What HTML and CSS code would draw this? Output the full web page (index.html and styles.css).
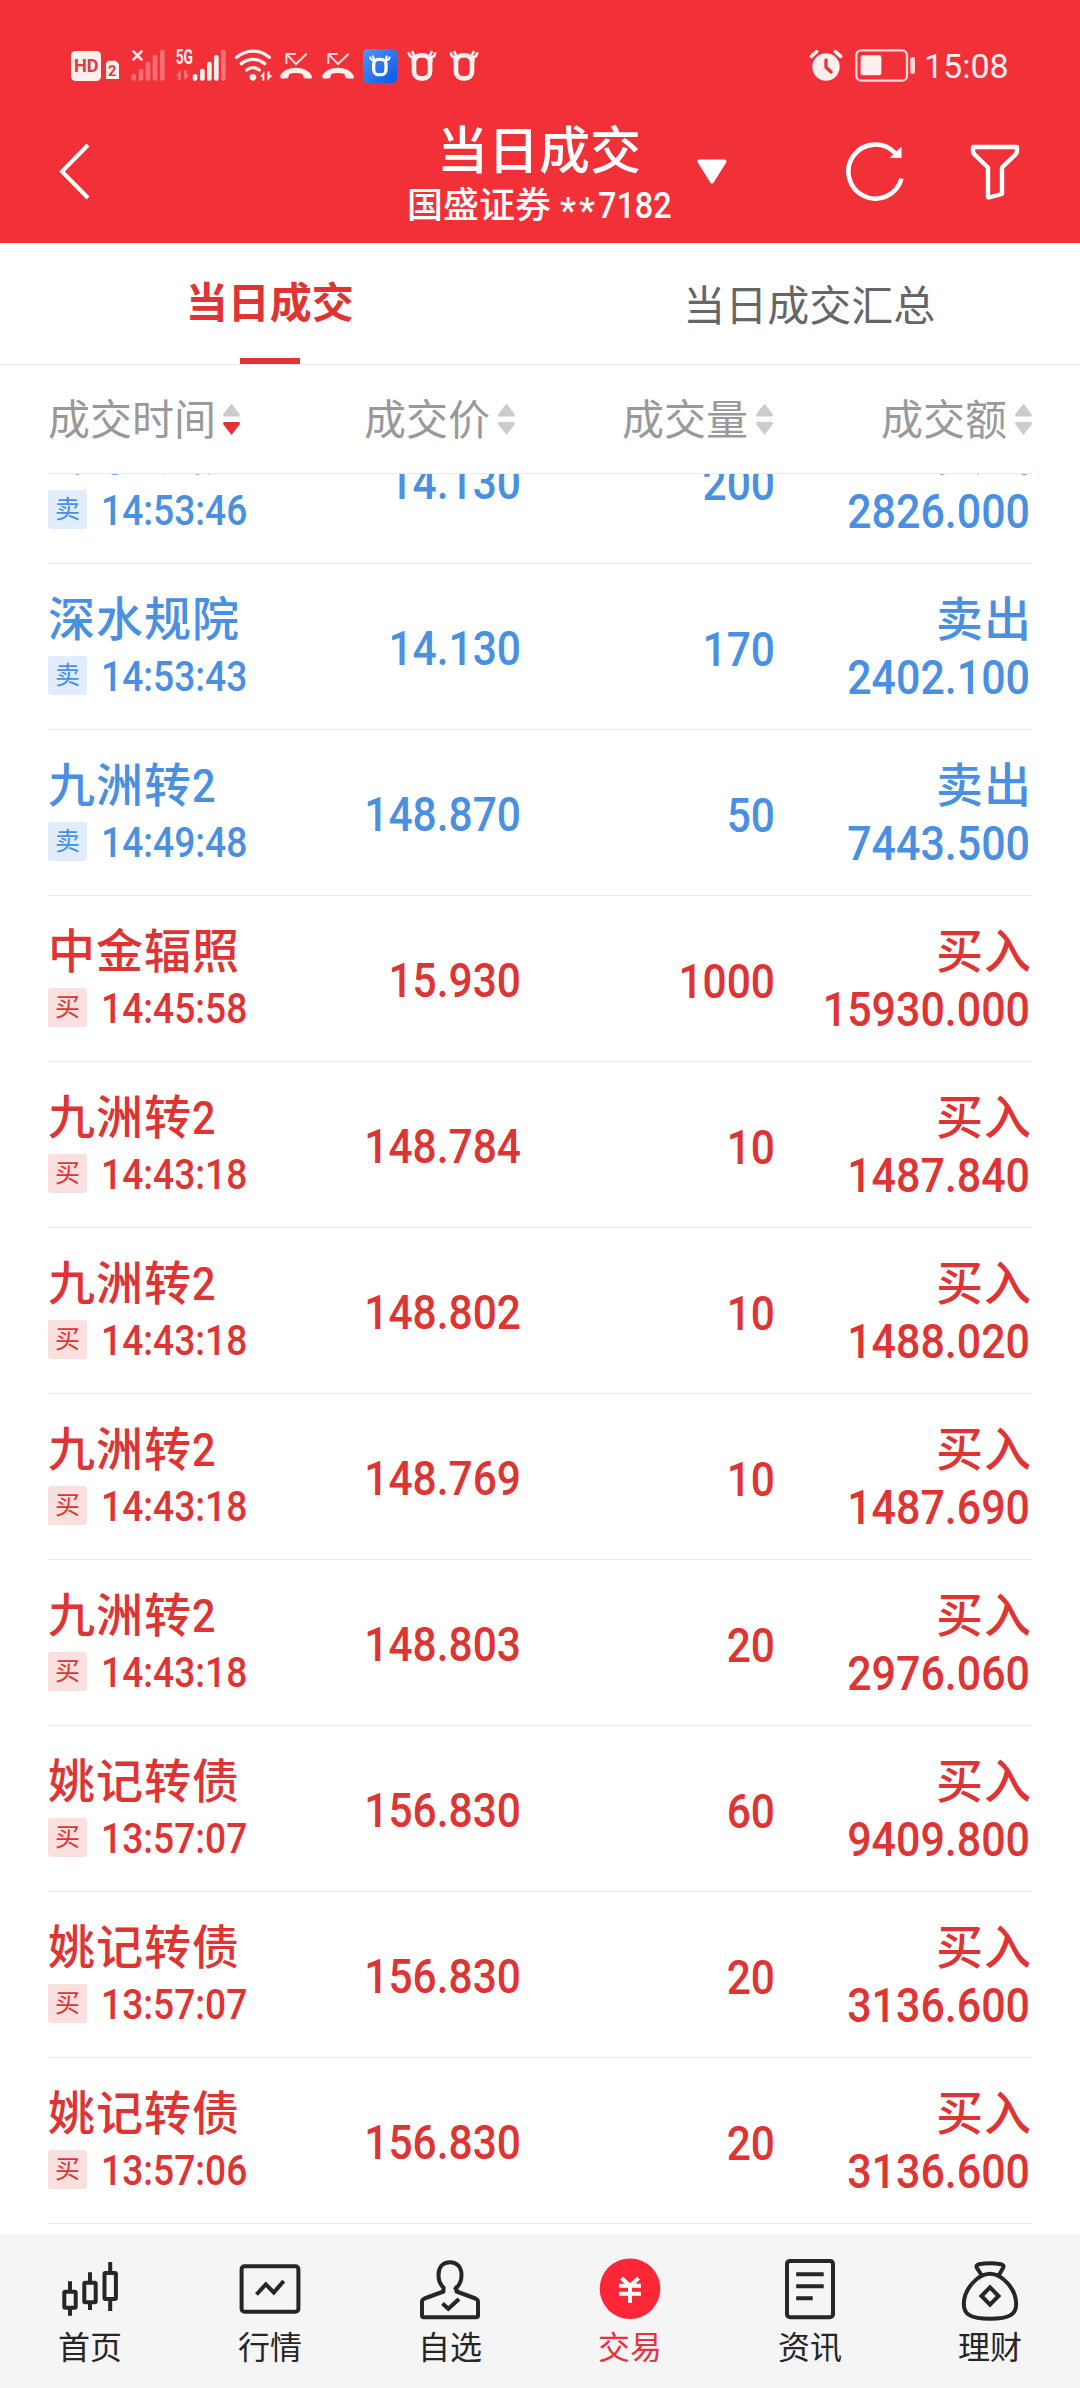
FILE: index.html
```html
<!DOCTYPE html>
<html lang="zh-CN">
<head>
<meta charset="utf-8">
<title>当日成交</title>
<link rel="stylesheet" href="styles.css">
</head>
<body>
<header class="header">
  <div class="status">
    <div class="status-left">
      <svg width="52" height="40" viewBox="90 45 156 120">
        <rect x="93" y="63" width="90" height="90" rx="14" fill="#fff0f0"/>
        <text x="102" y="127" class="hd" textLength="74" lengthAdjust="spacingAndGlyphs">HD</text>
        <path d="M204 92H227L237 102V147H198V98Z" fill="#fff0f0"/>
        <text x="217" y="138" class="sim" text-anchor="middle">2</text>
      </svg>
      <svg width="50" height="40" viewBox="246 45 150 120">
        <path d="M278 62L307 91M307 62L278 91" stroke="#fff0f0" stroke-width="8"/>
        <g fill="#fff" opacity=".3"><rect x="274" y="132" width="14" height="20" rx="6"/><rect x="296" y="116" width="14" height="36" rx="6"/><rect x="317" y="95" width="14" height="57" rx="6"/><rect x="338" y="75" width="14" height="77" rx="6"/><rect x="360" y="59" width="14" height="93" rx="6"/></g>
      </svg>
      <svg width="60" height="40" viewBox="396 45 180 120">
        <text x="407" y="101" class="net" textLength="52" lengthAdjust="spacingAndGlyphs">5G</text>
        <path d="M408 138L422 120V150H415V136ZM433 120V150L449 134H440V120Z" fill="#ff7c80"/>
        <g fill="#fff0f0"><rect x="458" y="132" width="14" height="20" rx="6"/><rect x="480" y="116" width="14" height="36" rx="6"/><rect x="501" y="95" width="14" height="57" rx="6"/><rect x="522" y="75" width="14" height="77" rx="6"/><rect x="543" y="59" width="14" height="93" rx="6" opacity=".35"/></g>
      </svg>
      <svg width="44" height="40" viewBox="576 45 132 120">
        <g fill="none" stroke="#fff0f0" stroke-width="10" stroke-linecap="round"><path d="M590 82C619 57 659 57 688 82M604 101C625 84 653 84 674 101M620 120C632 111 646 111 658 120"/></g>
        <circle cx="639" cy="142" r="10" fill="#fff0f0"/>
        <path d="M660 140L673 124V152H667V140ZM682 124V152L698 136H689V124Z" fill="#fff0f0"/>
      </svg>
      <svg width="42" height="40" viewBox="708 45 126 120">
        <path d="M739 102V72H768M740 73L768 102L800 71" fill="none" stroke="#ffd9da" stroke-width="6"/>
        <path d="M720 139C735 105 800 105 816 139L814 146L792 145L787 132Q768 126 748 132L744 145L724 146Z" fill="#fff0f0"/>
      </svg>
      <svg width="42" height="40" viewBox="708 45 126 120">
        <path d="M739 102V72H768M740 73L768 102L800 71" fill="none" stroke="#ffd9da" stroke-width="6"/>
        <path d="M720 139C735 105 800 105 816 139L814 146L792 145L787 132Q768 126 748 132L744 145L724 146Z" fill="#fff0f0"/>
      </svg>
      <svg width="42" height="40" viewBox="960 45 126 120">
        <defs><linearGradient id="blue" x1="0" y1="0" x2="1" y2="1"><stop offset="0" stop-color="#5296f4"/><stop offset="1" stop-color="#0858ec"/></linearGradient></defs>
        <rect x="969" y="57" width="102" height="102" rx="14" fill="url(#blue)"/>
        <rect x="1001" y="88" width="37" height="46" rx="15" fill="none" stroke="#fff" stroke-width="10"/>
        <path d="M1006 92Q991 92 990 80M1033 92Q1048 92 1049 80M1003 91L998 77M1036 91L1041 77" fill="none" stroke="#fff" stroke-width="6"/>
      </svg>
      <svg width="42" height="40" viewBox="1086 45 126 120">
        <rect x="1122" y="76" width="48" height="69" rx="20" fill="none" stroke="#fff0f0" stroke-width="14"/>
        <path d="M1127 82Q1108 85 1106 67M1165 82Q1184 85 1186 67M1124 80L1116 63M1168 80L1176 63M1118 82V96M1174 82V96" fill="none" stroke="#fff0f0" stroke-width="8"/>
      </svg>
      <svg width="42" height="40" viewBox="1086 45 126 120">
        <rect x="1122" y="76" width="48" height="69" rx="20" fill="none" stroke="#fff0f0" stroke-width="14"/>
        <path d="M1127 82Q1108 85 1106 67M1165 82Q1184 85 1186 67M1124 80L1116 63M1168 80L1176 63M1118 82V96M1174 82V96" fill="none" stroke="#fff0f0" stroke-width="8"/>
      </svg>
    </div>
    <div class="status-right">
      <svg width="36" height="40" viewBox="84 45 108 120">
        <circle cx="138" cy="111" r="41" fill="#fff0f0"/>
        <path d="M94 79L110 65M182 79L166 65" stroke="#fff0f0" stroke-width="11" stroke-linecap="round"/>
        <path d="M138 90V112L153 126" fill="none" stroke="#f23038" stroke-width="10" stroke-linecap="round" stroke-linejoin="round"/>
      </svg>
      <svg class="battery" width="66" height="40" viewBox="216 45 198 120">
        <rect x="229" y="61" width="152" height="91" rx="15" fill="none" stroke="#ffd9da" stroke-width="7"/>
        <rect x="242" y="76" width="62" height="60" rx="6" fill="#fff0f0"/>
        <rect x="391" y="81" width="14" height="51" rx="6" fill="#ffd9da"/>
      </svg>
      <span class="clock">15:08</span>
    </div>
  </div>
  <div class="titlebar">
    <svg class="back" width="40" height="64" viewBox="0 0 40 64"><path d="M34 6L8 32.500L34 59" fill="none" stroke="#fff" stroke-width="4"/></svg>
    <div class="titles">
      <div class="title">当日成交</div>
      <div class="account"><span>国盛证券</span><span class="stars">**</span><span class="tail">7182</span></div>
    </div>
    <svg class="caret" width="30" height="25" viewBox="0 0 30 25"><path d="M2.500 2.500H27.500L15 22.500Z" fill="#fff" stroke="#fff" stroke-width="4" stroke-linejoin="round"/></svg>
    <svg class="refresh" width="60" height="60" viewBox="0 0 60 60">
      <path d="M55.500 37.500A27 27 0 1 1 49 12" fill="none" stroke="#fff" stroke-width="4.600"/>
      <path d="M55.500 5.500V17H43.500Z" fill="#fff"/>
    </svg>
    <svg class="filter" width="52" height="60" viewBox="0 0 52 60"><path d="M4.500 5H47.500Q48 5 48 5.500V9Q48 11 46.500 12.500L33 25.500V52L20 55.500Q19 55.500 19 54.500V25.500L5.500 12.500Q4 11 4 9V5.500Q4 5 4.500 5Z" fill="none" stroke="#fff" stroke-width="4.400" stroke-linejoin="round"/></svg>
  </div>
</header>

<nav class="tabs">
  <div class="tab active">当日成交</div>
  <div class="tab">当日成交汇总</div>
</nav>

<div class="columns">
  <div class="col"><span>成交时间</span><i class="sort desc"></i></div>
  <div class="col"><span>成交价</span><i class="sort"></i></div>
  <div class="col"><span>成交量</span><i class="sort"></i></div>
  <div class="col"><span>成交额</span><i class="sort"></i></div>
</div>

<main class="list">
  <div class="row sell"><div><div class="name">深水规院</div><div class="when"><span class="tag">卖</span><span class="time">14:53:46</span></div></div><div class="num">14.130</div><div class="num qty">200</div><div class="sum"><div class="side">卖出</div><div class="num amount">2826.000</div></div></div>
  <div class="row sell"><div><div class="name">深水规院</div><div class="when"><span class="tag">卖</span><span class="time">14:53:43</span></div></div><div class="num">14.130</div><div class="num qty">170</div><div class="sum"><div class="side">卖出</div><div class="num amount">2402.100</div></div></div>
  <div class="row sell"><div><div class="name">九洲转<span class="digit">2</span></div><div class="when"><span class="tag">卖</span><span class="time">14:49:48</span></div></div><div class="num">148.870</div><div class="num qty">50</div><div class="sum"><div class="side">卖出</div><div class="num amount">7443.500</div></div></div>
  <div class="row buy"><div><div class="name">中金辐照</div><div class="when"><span class="tag">买</span><span class="time">14:45:58</span></div></div><div class="num">15.930</div><div class="num qty">1000</div><div class="sum"><div class="side">买入</div><div class="num amount">15930.000</div></div></div>
  <div class="row buy"><div><div class="name">九洲转<span class="digit">2</span></div><div class="when"><span class="tag">买</span><span class="time">14:43:18</span></div></div><div class="num">148.784</div><div class="num qty">10</div><div class="sum"><div class="side">买入</div><div class="num amount">1487.840</div></div></div>
  <div class="row buy"><div><div class="name">九洲转<span class="digit">2</span></div><div class="when"><span class="tag">买</span><span class="time">14:43:18</span></div></div><div class="num">148.802</div><div class="num qty">10</div><div class="sum"><div class="side">买入</div><div class="num amount">1488.020</div></div></div>
  <div class="row buy"><div><div class="name">九洲转<span class="digit">2</span></div><div class="when"><span class="tag">买</span><span class="time">14:43:18</span></div></div><div class="num">148.769</div><div class="num qty">10</div><div class="sum"><div class="side">买入</div><div class="num amount">1487.690</div></div></div>
  <div class="row buy"><div><div class="name">九洲转<span class="digit">2</span></div><div class="when"><span class="tag">买</span><span class="time">14:43:18</span></div></div><div class="num">148.803</div><div class="num qty">20</div><div class="sum"><div class="side">买入</div><div class="num amount">2976.060</div></div></div>
  <div class="row buy"><div><div class="name">姚记转债</div><div class="when"><span class="tag">买</span><span class="time">13:57:07</span></div></div><div class="num">156.830</div><div class="num qty">60</div><div class="sum"><div class="side">买入</div><div class="num amount">9409.800</div></div></div>
  <div class="row buy"><div><div class="name">姚记转债</div><div class="when"><span class="tag">买</span><span class="time">13:57:07</span></div></div><div class="num">156.830</div><div class="num qty">20</div><div class="sum"><div class="side">买入</div><div class="num amount">3136.600</div></div></div>
  <div class="row buy"><div><div class="name">姚记转债</div><div class="when"><span class="tag">买</span><span class="time">13:57:06</span></div></div><div class="num">156.830</div><div class="num qty">20</div><div class="sum"><div class="side">买入</div><div class="num amount">3136.600</div></div></div>
</main>

<footer class="nav">
  <div class="item">
    <svg class="icon" viewBox="0 0 72 72"><path d="M16 28.300V38M16 55V62.700M36 19.300V29M36 50V57M56.200 9V19M56.200 46V58" /><rect x="10.300" y="38.700" width="11.400" height="16" rx="1"/><rect x="30.300" y="29.700" width="11.400" height="19.500" rx="1"/><rect x="50.500" y="20" width="11.400" height="26" rx="1"/></svg>
    <span>首页</span>
  </div>
  <div class="item">
    <svg class="icon" viewBox="0 0 72 72"><rect x="7.600" y="13.200" width="56.800" height="45.600" rx="3"/><path d="M22.500 41.500L31.800 31.300L39.800 39.500L49.700 28"/></svg>
    <span>行情</span>
  </div>
  <div class="item">
    <svg class="icon" viewBox="0 0 72 72"><path d="M29.500 34V38.500L10.500 45.500Q8 46.500 8 49V62.500Q8 64.300 10 64.300H62Q64 64.300 64 62.500V49Q64 46.500 61.500 45.500L42.500 38.500V34L41.500 35.500C46 32 47.500 27 47.500 22C47.500 14 43 9.200 36 9.200C29 9.200 24.500 14 24.500 22C24.500 27 26 32 30.500 35.500" stroke-linejoin="round"/><path d="M28.500 50.500L34.300 55.800L45 46"/></svg>
    <span>自选</span>
  </div>
  <div class="item current">
    <svg class="icon" viewBox="0 0 72 72"><circle cx="36" cy="35.700" r="30.300" fill="#ff2638" stroke="none"/><path d="M27.500 25L36 33L44.500 25M25 32.700H47M25 40.700H47M36 32V49.700" stroke="#fff"/></svg>
    <span>交易</span>
  </div>
  <div class="item">
    <svg class="icon" viewBox="0 0 72 72"><rect x="13" y="7.900" width="46" height="56.300" rx="3"/><path d="M22.200 21.300H49.700M22.200 33.300H49.700M22.200 45.300H38.700"/></svg>
    <span>资讯</span>
  </div>
  <div class="item">
    <svg class="icon" viewBox="0 0 72 72"><path d="M27.500 22L23 15Q21.500 12 25 11.200Q36 9.500 47 11.200Q50.500 12 49 15L45 22M36 20.800C48 20.800 62.200 36 62.200 51C62.200 61 56 65.700 36 65.700C16 65.700 9.800 61 9.800 51C9.800 36 24 20.800 36 20.800Z"/><path d="M36 34.300L44.500 43L36 51.700L27.500 43Z"/></svg>
    <span>理财</span>
  </div>
</footer>
</body>
</html>
```
FILE: styles.css
```css
* { box-sizing: border-box; }

body {
  margin: 0;
  width: 1080px;
  height: 2388px;
  display: flex;
  flex-direction: column;
  overflow: hidden;
  background: #fff;
  font-family: Roboto, "Noto Sans CJK SC", sans-serif;
}

svg { display: block; flex: none; }

/* header */
.header { flex: none; height: 243px; background: #f23038; color: #fff; }
.status { height: 111px; padding: 45px 72px 0 70px; display: flex; justify-content: space-between; }
.status-left, .status-right { display: flex; }
.hd { font: 700 54px Roboto, sans-serif; fill: #e23840; }
.sim { font: 700 44px Roboto, sans-serif; fill: #e23840; }
.net { font: 700 58px Roboto, sans-serif; fill: #fff0f0; }
.battery { margin: 0 6px 0 8px; }
.clock { width: 84px; font-size: 34px; line-height: 42px; color: #fff0f0; white-space: nowrap; }

.titlebar { display: flex; height: 132px; padding-left: 54px; }
.back { margin-top: 28px; }
.titles { width: 264px; margin-left: 313px; margin-top: 7px; white-space: nowrap; font-weight: 500; }
.title { font-size: 51px; line-height: 67px; text-align: center; }
.account { display: flex; font-size: 36px; line-height: 42px; }
.stars { margin-left: 9px; width: 38px; padding-top: 5px; letter-spacing: 3px; }
.tail { transform: scaleX(.9); transform-origin: left; }
.caret { margin: 48px 0 0 26px; }
.refresh { margin: 30px 0 0 119px; }
.filter { margin: 31px 0 0 63px; }

/* tabs */
.tabs { flex: none; height: 122px; display: flex; border-bottom: 1px solid #ececec; }
.tab { flex: 1; padding: 3px 1px 0 0; text-align: center; font-size: 42px; line-height: 121px; color: #666; }
.tab.active {
  padding: 0;
  font-weight: 600;
  color: #e03333;
  background: linear-gradient(#e03333, #e03333) center bottom / 60px 6px no-repeat;
}

/* column headings */
.columns { flex: none; height: 109px; margin: 0 48px; display: grid; grid-template-columns: 209px 258px 258px 259px; border-bottom: 1px solid #ececec; }
.col { display: flex; align-items: center; justify-content: flex-end; font-size: 42px; line-height: 50px; color: #999; white-space: nowrap; }
.col:first-child { justify-content: flex-start; }
.col span { padding-top: 4px; }
.sort { margin-left: 8px; display: flex; flex-direction: column; gap: 5px; }
.sort::before, .sort::after { content: ""; width: 17px; height: 13px; background: #ccc; clip-path: polygon(50% 0, 100% 85%, 96% 100%, 4% 100%, 0 85%); }
.sort::after { transform: scaleY(-1); }
.sort.desc { margin-left: 7px; }
.sort.desc::after { background: #e03333; }

/* trades */
.list { flex: 1; min-height: 0; margin: 0 48px; padding-bottom: 10px; overflow: hidden; display: flex; flex-direction: column; justify-content: flex-end; }
.row { flex: none; height: 166px; display: grid; grid-template-columns: 215px 258px 254px 257px; border-bottom: 1px solid #ececec; font-weight: 500; white-space: nowrap; }
.sell { color: #4a90e2; --tint: #e1edfb; }
.buy { color: #de3433; --tint: #fbe0e0; }
.name, .side { margin-top: 28px; font-size: 47px; line-height: 56px; letter-spacing: 1px; }
.side { text-align: right; }
.digit { display: inline-block; transform: scaleX(.88); transform-origin: left; }
.when { display: flex; align-items: center; height: 57px; }
.tag { flex: none; width: 39px; height: 39px; margin-bottom: 2px; border-radius: 3px; background: var(--tint); font-size: 25px; line-height: 39px; font-weight: 400; text-align: center; }
.time { margin-left: 14px; font-size: 42px; line-height: 54px; transform: scaleX(.885); transform-origin: left; }
.num { font-size: 48px; line-height: 170px; text-align: right; transform: scaleX(.885); transform-origin: right; }
.qty { line-height: 172px; }
.amount { line-height: 59px; margin-right: 2px; transform: scaleX(.895); }

/* bottom navigation */
.nav { flex: none; height: 154px; display: flex; background: #f5f5f5; }
.item { flex: 1; padding-top: 19px; display: flex; flex-direction: column; align-items: center; font-size: 32px; line-height: 46px; color: #262626; }
.icon { width: 72px; height: 72px; fill: none; stroke: #262626; stroke-width: 4; }
.current { color: #e8323f; }
```
